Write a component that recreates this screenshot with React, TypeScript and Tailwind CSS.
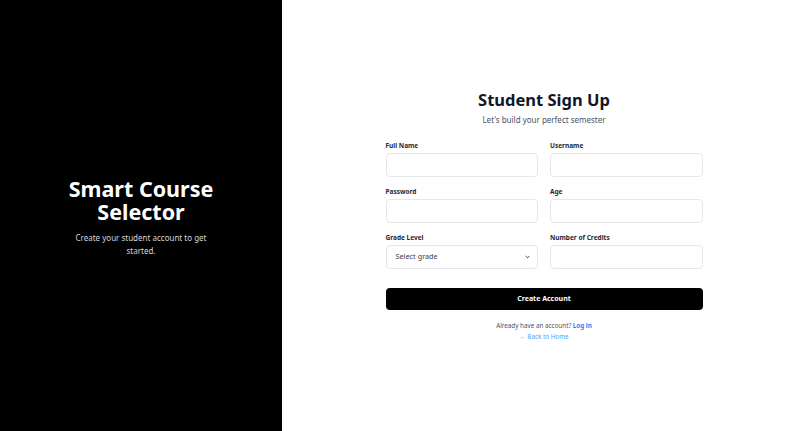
import React from "react";

export default function App() {
  const font = { fontFamily: '"Noto Sans", "Open Sans", sans-serif' };
  return (
    <div className="flex w-full h-[431px] bg-white" style={font}>
      <div className="w-[282px] bg-black flex flex-col items-center justify-center px-6 pt-[2px]">
        <h1 className="text-white text-[21.5px] font-bold leading-[23px] text-center flex flex-col">
          <span>Smart Course</span>
          <span>Selector</span>
        </h1>
        <p className="mt-[8px] text-[8px] leading-[13px] text-gray-300 text-center w-[150px]">Create your student account to get started.</p>
      </div>
      <div className="flex-1 flex items-center justify-center">
        <div className="w-[317px] flex flex-col">
          <h2 className="text-center text-[16.5px] font-bold text-gray-900 leading-[22px]">Student Sign Up</h2>
          <p className="text-center text-[8px] text-gray-600 mt-[3px] leading-[12px]">Let's build your perfect semester</p>
          <div className="grid grid-cols-2 gap-x-[12px] gap-y-[10px] mt-[15px]">
            {[
              ["Full Name", "input"],
              ["Username", "input"],
              ["Password", "input"],
              ["Age", "input"],
              ["Grade Level", "select"],
              ["Number of Credits", "input"],
            ].map(([label, kind]) => (
              <div key={label} className="flex flex-col">
                <label className="text-[6.5px] font-bold text-gray-800 leading-[10px] mb-[2px]">{label}</label>
                {kind === "select" ? (
                  <div className="h-[24px] border border-gray-200 rounded-[4px] flex items-center justify-between pl-[9px] pr-[7px]">
                    <span className="text-[7.3px] text-gray-700">Select grade</span>
                    <svg width="5" height="4" viewBox="0 0 6 4"><path d="M0.8 0.8 L3 3 L5.2 0.8" stroke="#333" strokeWidth="1.1" fill="none" /></svg>
                  </div>
                ) : (
                  <div className="h-[24px] border border-gray-200 rounded-[4px]" />
                )}
              </div>
            ))}
          </div>
          <button className="mt-[19px] h-[22px] bg-black text-white rounded-[4px] text-[7px] font-bold">Create Account</button>
          <p className="mt-[10.5px] text-center text-[6.3px] text-gray-600 leading-[11px]">Already have an account? <span className="text-blue-500 font-bold">Log in</span></p>
          <p className="text-center text-[6.3px] text-blue-400 leading-[11px]">← Back to Home</p>
        </div>
      </div>
    </div>
  );
}
